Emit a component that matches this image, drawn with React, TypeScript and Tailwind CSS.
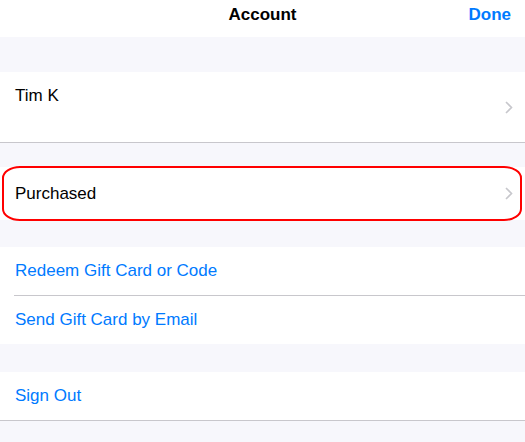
import React from "react";

function Chevron() {
  return (
    <svg width="8" height="13" viewBox="0 0 8 13" className="shrink-0">
      <path d="M1 1 L6.5 6.5 L1 12" fill="none" stroke="#c7c7cc" strokeWidth="1.6" />
    </svg>
  );
}

export default function App() {
  const font = { fontFamily: '"Liberation Sans", Arial, sans-serif' };
  return (
    <div className="w-[525px] h-[442px] bg-[#f7f7fc] overflow-hidden" style={font}>
      <div className="relative h-[37px] bg-white flex items-start justify-center pt-[5px]">
        <span className="text-[17px] leading-[20px] font-semibold text-black">Account</span>
        <span className="absolute right-[14px] top-[5px] text-[17px] leading-[20px] font-bold text-[#007aff]">Done</span>
      </div>
      <div className="h-[35px]" />
      <div className="h-[71px] bg-white border-b border-[#c8c7cc] flex items-center pl-[15px] pr-[12px]">
        <span className="self-start pt-[14px] text-[17px] leading-[20px] text-black flex-1">Tim K</span>
        <Chevron />
      </div>
      <div className="h-[24px]" />
      <div className="relative h-[53px] bg-white flex items-center pl-[15px] pr-[12px]">
        <span className="pt-[1px] text-[17px] leading-[20px] text-black flex-1">Purchased</span>
        <Chevron />
        <div className="absolute left-[2px] right-[3px] top-[-1px] bottom-[-1px] border-[2.5px] border-[#ff0000] rounded-[18px/12px]" />
      </div>
      <div className="h-[27px]" />
      <div className="bg-white">
        <div className="h-[48px] flex items-center pl-[15px]">
          <span className="text-[17px] leading-[20px] text-[#007aff]">Redeem Gift Card or Code</span>
        </div>
        <div className="ml-[14px] h-px bg-[#c8c7cc]" />
        <div className="h-[48px] flex items-center pl-[15px]">
          <span className="text-[17px] leading-[20px] text-[#007aff]">Send Gift Card by Email</span>
        </div>
      </div>
      <div className="h-[28px]" />
      <div className="h-[49px] bg-white border-b border-[#c8c7cc] flex items-center pl-[15px]">
        <span className="text-[17px] leading-[20px] text-[#007aff]">Sign Out</span>
      </div>
    </div>
  );
}
